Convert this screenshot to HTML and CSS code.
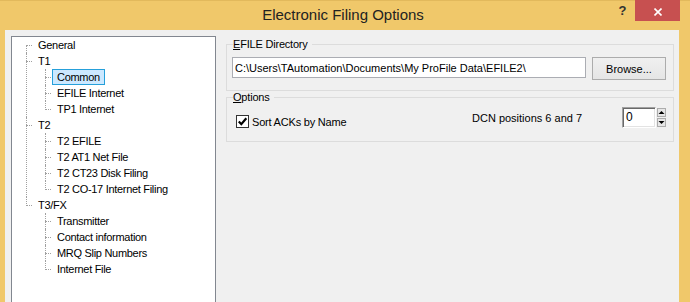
FILE: index.html
```html
<!DOCTYPE html>
<html lang="en">
<head>
<meta charset="utf-8">
<title>Electronic Filing Options</title>
<link rel="stylesheet" href="styles.css">
</head>
<body>
<div class="window">
  <div class="titlebar">
    <div class="spacer"></div>
    <div class="title">Electronic Filing Options</div>
    <div class="caption">
      <div class="help">?</div>
      <div class="close">
        <svg width="8" height="8" viewBox="0 0 8 8"><path d="M0.5 0.5 L7.5 7.5 M7.5 0.5 L0.5 7.5" stroke="#fff" stroke-width="1.6" fill="none"/></svg>
      </div>
    </div>
  </div>
  <div class="client">
    <div class="treebox">
      <ul class="tree">
        <li><span class="node">General</span></li>
        <li><span class="node">T1</span>
          <ul>
            <li><span class="node selected">Common</span></li>
            <li><span class="node">EFILE Internet</span></li>
            <li><span class="node">TP1 Internet</span></li>
          </ul>
        </li>
        <li><span class="node">T2</span>
          <ul>
            <li><span class="node">T2 EFILE</span></li>
            <li><span class="node">T2 AT1 Net File</span></li>
            <li><span class="node">T2 CT23 Disk Filing</span></li>
            <li><span class="node">T2 CO-17 Internet Filing</span></li>
          </ul>
        </li>
        <li><span class="node">T3/FX</span>
          <ul>
            <li><span class="node">Transmitter</span></li>
            <li><span class="node">Contact information</span></li>
            <li><span class="node">MRQ Slip Numbers</span></li>
            <li><span class="node">Internet File</span></li>
          </ul>
        </li>
      </ul>
    </div>
    <div class="panel">
      <fieldset class="group dir">
        <legend><u>E</u>FILE Directory</legend>
        <div class="row">
          <input class="path" type="text" value="C:\Users\TAutomation\Documents\My ProFile Data\EFILE2\">
          <button class="btn" type="button">Browse...</button>
        </div>
      </fieldset>
      <fieldset class="group opts">
        <legend><u>O</u>ptions</legend>
        <div class="row">
          <label class="check">
            <span class="box"><svg width="11" height="11" viewBox="0 0 11 11"><path d="M1.8 5.6 L4.3 8.2 L9.3 2.2" stroke="#000" stroke-width="2.2" fill="none"/></svg></span>
            <span class="check-text">Sort ACKs by Name</span>
          </label>
          <span class="dcn">DCN positions 6 and 7</span>
          <div class="spin">
            <div class="spin-field">0</div>
            <div class="spin-btns">
              <span class="arrow"><svg width="7" height="7" viewBox="0 0 7 7"><path d="M0.5 5 L3.5 2 L6.5 5 Z" fill="#000"/></svg></span>
              <span class="arrow"><svg width="7" height="7" viewBox="0 0 7 7"><path d="M0.5 2 L3.5 5 L6.5 2 Z" fill="#000"/></svg></span>
            </div>
          </div>
        </div>
      </fieldset>
    </div>
  </div>
</div>
</body>
</html>
```

FILE: styles.css
```css
html, body {
  margin: 0;
  height: 302px;
  overflow: hidden;
}

body {
  background: #F0C86A;
  font-family: "Liberation Sans", Arial, sans-serif;
  font-size: 11px;
  color: #000;
}

.titlebar {
  display: grid;
  grid-template-columns: 76px 1fr 80px;
  height: 30px;
  box-shadow: inset 0 1px 0 #E2B95C;
}

.title {
  text-align: center;
  font-size: 15px;
  line-height: 30px;
  color: #222;
  white-space: nowrap;
}

.caption {
  display: flex;
  align-items: flex-start;
}

.help {
  width: 25px;
  height: 21px;
  line-height: 21px;
  text-align: center;
  font-weight: bold;
  font-size: 13px;
  color: #333;
}

.close {
  width: 45px;
  height: 21px;
  background: #C75050;
  display: flex;
  align-items: center;
  justify-content: center;
}

.close svg {
  margin-top: 2px;
  margin-left: 1px;
}

.client {
  margin-left: 5px;
  width: 674px;
  height: 272px;
  box-sizing: border-box;
  padding: 6px 0 0 6px;
  background: #F0F0F0;
  display: flex;
  align-items: flex-start;
}

.treebox {
  width: 205px;
  height: 266px;
  box-sizing: border-box;
  border: 1px solid #828790;
  border-bottom: 0;
  background: #fff;
}

.tree,
.tree ul {
  list-style: none;
  margin: 0;
}

.tree {
  padding: 0 0 0 21px;
}

.tree ul {
  padding: 0 0 0 19px;
}

.tree li {
  position: relative;
}

.tree li::before {
  content: "";
  position: absolute;
  left: -7px;
  top: 8px;
  width: 6px;
  border-top: 1px dotted #A0A0A0;
}

.tree li::after {
  content: "";
  position: absolute;
  left: -7px;
  top: 0;
  bottom: 0;
  border-left: 1px dotted #A0A0A0;
}

.tree li:last-child::after {
  bottom: auto;
  height: 9px;
}

.tree > li:first-child::after {
  top: 8px;
}

.node {
  display: block;
  width: max-content;
  height: 16px;
  box-sizing: border-box;
  line-height: 14px;
  padding: 0 4px;
  border: 1px solid transparent;
  white-space: nowrap;
  letter-spacing: -0.3px;
}

.node.selected {
  background: #CCE8FF;
  border-color: #26A0DA;
}

.panel {
  margin-left: 10px;
  width: 448px;
  padding-top: 2px;
}

.group {
  margin: 0;
  min-width: 0;
  border: 1px solid #DCDCDC;
}

.group legend {
  padding: 0 4px 0 0;
  margin-left: 1px;
  height: 13px;
  line-height: 13px;
  letter-spacing: -0.2px;
}

.dir {
  padding: 6px 7px 10px 5px;
}

.opts {
  padding: 3px 7px 13px 5px;
}

.row {
  display: flex;
  align-items: flex-start;
}

.path {
  width: 354px;
  height: 21px;
  box-sizing: border-box;
  margin: 0;
  padding: 0 2px;
  border: 1px solid #ABADB3;
  background: #fff;
  font: 11px "Liberation Sans", Arial, sans-serif;
  color: #000;
  outline: none;
}

.btn {
  margin: 0 0 0 6px;
  width: 74px;
  height: 23px;
  box-sizing: border-box;
  padding: 0;
  border: 1px solid #ACACAC;
  background: linear-gradient(#F0F0F0, #E5E5E5);
  font: 11px "Liberation Sans", Arial, sans-serif;
  color: #000;
}

.check {
  flex: 1;
  align-self: flex-end;
  display: flex;
  align-items: center;
  margin-left: 4px;
  letter-spacing: -0.2px;
}

.box {
  width: 13px;
  height: 13px;
  box-sizing: border-box;
  border: 1px solid #333;
  background: #fff;
  display: flex;
  align-items: center;
  justify-content: center;
}

.check-text {
  margin-left: 3px;
}

.dcn {
  width: 150px;
  align-self: center;
}

.spin {
  display: flex;
  align-items: flex-start;
  gap: 1px;
}

.spin-field {
  width: 34px;
  height: 21px;
  box-sizing: border-box;
  border: 1px solid;
  border-color: #A0A0A0 #FFFFFF #FFFFFF #A0A0A0;
  box-shadow: inset 1px 1px 0 #696969, inset -1px -1px 0 #E3E3E3;
  background: #fff;
  font-size: 12px;
  line-height: 19px;
  padding-left: 3px;
}

.spin-btns {
  display: flex;
  flex-direction: column;
  gap: 1px;
  margin-top: 1px;
}

.arrow {
  width: 9px;
  height: 9px;
  box-sizing: border-box;
  border: 1px solid #ACACAC;
  background: #E6E6E6;
  display: flex;
  align-items: center;
  justify-content: center;
}
```
